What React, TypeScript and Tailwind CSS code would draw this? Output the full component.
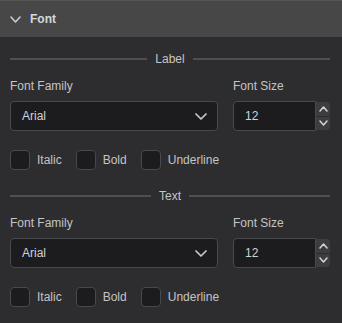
import React from "react";

function Divider({ label }: { label: string }) {
  return (
    <div className="flex items-center h-[14px] gap-[8px]">
      <div className="flex-1 h-[2px] bg-[#4f4f52]" />
      <span className="leading-[14px] text-[#c4c4c6]">{label}</span>
      <div className="flex-1 h-[2px] bg-[#4f4f52]" />
    </div>
  );
}

function Chevron({ up = false, w = 10, h = 6, color = "#c8c8cc", sw = 1.6 }: { up?: boolean; w?: number; h?: number; color?: string; sw?: number }) {
  return (
    <svg width={w} height={h} viewBox={`0 0 ${w} ${h}`} fill="none">
      <path
        d={up ? `M1 ${h - 1} L${w / 2} 1 L${w - 1} ${h - 1}` : `M1 1 L${w / 2} ${h - 1} L${w - 1} 1`}
        stroke={color}
        strokeWidth={sw}
        strokeLinecap="round"
        strokeLinejoin="round"
      />
    </svg>
  );
}

function Check({ label }: { label: string }) {
  return (
    <div className="flex items-center gap-[7px]">
      <div className="w-[20px] h-[20px] rounded-[4px] border border-[#49494c] bg-[#1c1c1e]" />
      <span className="text-[#c4c4c6] leading-[14px]">{label}</span>
    </div>
  );
}

function Section({ label }: { label: string }) {
  return (
    <div className="flex flex-col">
      <Divider label={label} />
      <div className="flex gap-[15px] mt-[13px]">
        <div className="flex flex-col w-[208px]">
          <span className="leading-[14px] text-[#c4c4c6]">Font Family</span>
          <div className="mt-[8px] h-[30px] rounded-[4px] border border-[#49494c] bg-[#1c1c1e] flex items-center justify-between pl-[11px] pr-[10px]">
            <span className="text-[#d2d2d4]">Arial</span>
            <Chevron w={12} h={7} sw={1.7} />
          </div>
        </div>
        <div className="flex flex-col w-[97px]">
          <span className="leading-[14px] text-[#c4c4c6]">Font Size</span>
          <div className="mt-[8px] h-[30px] flex">
            <div className="flex-1 rounded-l-[4px] border border-[#49494c] bg-[#1c1c1e] flex items-center pl-[11px]">
              <span className="text-[#d2d2d4]">12</span>
            </div>
            <div className="w-[14px] flex flex-col gap-[1px] py-[1px]">
              <div className="flex-1 bg-[#3d3d40] rounded-tr-[4px] flex items-center justify-center">
                <Chevron up w={9} h={6} color="#d0d4dc" sw={1.5} />
              </div>
              <div className="flex-1 bg-[#3d3d40] rounded-br-[4px] flex items-center justify-center">
                <Chevron w={9} h={6} color="#d0d4dc" sw={1.5} />
              </div>
            </div>
          </div>
        </div>
      </div>
      <div className="flex gap-[14px] mt-[19px]">
        <Check label="Italic" />
        <Check label="Bold" />
        <Check label="Underline" />
      </div>
    </div>
  );
}

export default function App() {
  return (
    <div
      className="w-[342px] h-[323px] bg-[#2d2d2f] text-[12px] overflow-hidden"
      style={{ fontFamily: '"Liberation Sans", Arial, sans-serif' }}
    >
      <div className="h-[37px] bg-[#474747] border-t border-[#555555] flex items-center pl-[10px] gap-[9px]">
        <Chevron w={11} h={7} color="#c8ccd4" sw={1.6} />
        <span className="font-bold text-[#d4d8de]">Font</span>
      </div>
      <div className="pl-[10px] pr-[12px] pt-[15px] flex flex-col gap-[19px]">
        <Section label="Label" />
        <Section label="Text" />
      </div>
    </div>
  );
}
